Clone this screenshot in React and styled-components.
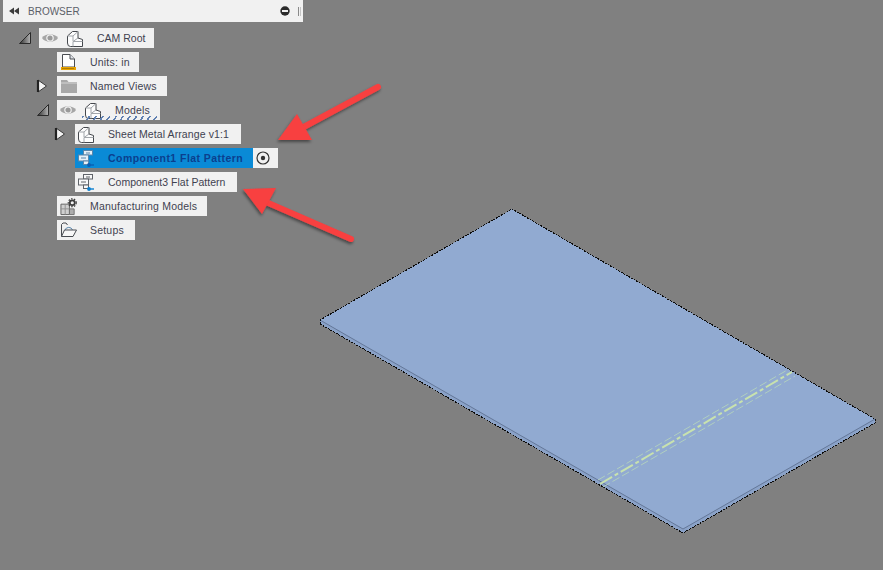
import React from "react";
import styled, { createGlobalStyle } from "styled-components";

const GlobalStyle = createGlobalStyle`
  html, body {
    margin: 0;
    padding: 0;
    background: #808080;
  }
`;

const Viewport = styled.div`
  position: relative;
  width: 883px;
  height: 570px;
  overflow: hidden;
  background: #808080;
  font-family: "Liberation Sans", Arial, sans-serif;
`;

const Scene = styled.svg`
  position: absolute;
  left: 0;
  top: 0;
`;

const Browser = styled.div`
  position: relative;
  width: 303px;
  padding-left: 3px;
  box-sizing: border-box;
`;

const Header = styled.div`
  display: flex;
  align-items: center;
  height: 22px;
  padding: 0 2px 0 6px;
  background: #f1f1f1;
  color: #5c6068;
  font-size: 10px;
`;

const HeaderTitle = styled.span`
  margin-left: 9px;
  flex: 1;
`;

const Grip = styled.span`
  width: 1px;
  height: 9px;
  margin-left: 8px;
  border-left: 1px solid #8a8a8a;
  border-right: 1px solid #c4c4c4;
`;

const Tree = styled.div`
  display: flex;
  flex-direction: column;
  gap: 4px;
  padding: 6px 0 0 15px;
`;

const Row = styled.div`
  display: flex;
  align-items: center;
  height: 20px;
  padding-left: ${(p) => p.$level * 18}px;
`;

const CaretSlot = styled.span`
  display: flex;
  width: 21px;
  height: 20px;
  align-items: center;
`;

const Pill = styled.div`
  position: relative;
  display: flex;
  align-items: center;
  height: 20px;
  width: ${(p) => p.$width}px;
  box-sizing: border-box;
  padding-left: 3px;
  background: ${(p) => (p.$selected ? "#0a8ad6" : "#f1f1f1")};
  color: ${(p) => (p.$selected ? "#0b3f8e" : "#3f4250")};
  font-size: 10.5px;
  font-weight: ${(p) => (p.$selected ? 700 : 400)};
  white-space: nowrap;
`;

const IconSlot = styled.span`
  display: flex;
  width: 17px;
  height: 17px;
  flex: none;
`;

const EyeSlot = styled.span`
  display: flex;
  width: 16px;
  margin-right: 9px;
  flex: none;
`;

const Label = styled.span`
  margin-left: 13px;
  letter-spacing: ${(p) => p.$tracking}px;
`;

const RadioCell = styled.div`
  display: flex;
  align-items: center;
  height: 20px;
  width: 25px;
  padding-left: 3px;
  box-sizing: border-box;
  background: #f1f1f1;
`;

const Hatch = styled.span`
  position: absolute;
  left: 25px;
  right: 1px;
  bottom: 0;
  height: 4px;
  background: repeating-linear-gradient(
    125deg,
    #5f80b2 0 1.6px,
    transparent 1.6px 5.5px
  );
`;

const CaretOpen = () => (
  <svg width="14" height="14" viewBox="0 0 14 14">
    <defs>
      <linearGradient id="caretFill" x1="0" y1="0" x2="1" y2="0">
        <stop offset="0" stopColor="#2e2e2e" />
        <stop offset="1" stopColor="#b4b4b4" />
      </linearGradient>
    </defs>
    <path d="M1.5 12.5 L12.5 1.5 V12.5 Z" fill="url(#caretFill)" stroke="#2a2a2a" strokeWidth="1" />
  </svg>
);

const CaretClosed = () => (
  <svg width="12" height="14" viewBox="0 0 12 14">
    <path d="M2 1 L10.5 7 L2 13 Z" fill="#f4f4f4" stroke="#3a3a3a" strokeWidth="1" />
    <path d="M2 1 V13" stroke="#222" strokeWidth="2.2" />
  </svg>
);

const Eye = () => (
  <svg width="16" height="16" viewBox="0 0 16 16">
    <path d="M0 8 C3 3 13 3 16 8 C13 13 3 13 0 8 Z" fill="#a6a6a6" />
    <circle cx="8" cy="8" r="3.2" fill="#9a9a9a" stroke="#f1f1f1" strokeWidth="1.2" />
  </svg>
);

const BodyIcon = () => (
  <svg width="17" height="17" viewBox="0 0 17 17" fill="none">
    <path d="M0.5 13 V6 L5.5 1.5 H11 V8 L15.5 9.5 V16.5 H3.5 Q0.5 16.5 0.5 13 Z" fill="#fdfdfd" stroke="#45484d" />
    <path d="M0.5 6 H6 L11 1.5 M6 6 V11 M6 16.5 V11.5 L11 8 M6 11.5 H15.5" stroke="#a2a6ab" />
  </svg>
);

const UnitsIcon = () => (
  <svg width="17" height="17" viewBox="0 0 17 17">
    <path d="M2.5 0.5 H10 L14.5 5 V13 H2.5 Z" fill="#fff" stroke="#4a4d52" />
    <path d="M10 0.5 V5 H14.5" fill="#dfe3e8" stroke="#4a4d52" />
    <rect x="1" y="13" width="15" height="3" fill="#eaa400" />
    <path d="M3 14v1M5 14v1M7 14v1M9 14v1M11 14v1M13 14v1" stroke="#7a5600" strokeWidth="1" />
  </svg>
);

const FolderIcon = () => (
  <svg width="17" height="17" viewBox="0 0 17 17">
    <path d="M1 2 H7 L8.5 4 H17 V15 H1 Z" fill="#a8a8a8" />
    <path d="M1 5 H17" stroke="#d4d4d4" />
  </svg>
);

const FlatPatternIcon = ({ selected }) => (
  <svg width="17" height="17" viewBox="0 0 17 17" fill={selected ? "#e6f0f7" : "#f9f9f9"} stroke={selected ? "#5a86ab" : "#60646a"}>
    <rect x="5.5" y="0.5" width="9" height="4.5" />
    <rect x="0.5" y="5" width="10" height="6" />
    <rect x="5.5" y="11" width="5" height="3.5" />
    <path d="M3 8 H8 M8 3 H12" fill="none" />
    <path d="M10 15 H16" stroke={selected ? "#0a5fb4" : "#0a7fd0"} strokeWidth="1.4" fill="none" />
    <circle cx="11" cy="15" r="1.9" fill={selected ? "#0a5fb4" : "#0a7fd0"} stroke="none" />
  </svg>
);

const ManufacturingIcon = () => (
  <svg width="18" height="18" viewBox="0 0 18 18">
    <path d="M1 6 H10 V17 H1 Z" fill="#cfcfcf" stroke="#606060" />
    <path d="M1 11 H10 M5.5 6 V17" stroke="#8f8f8f" />
    <path d="M10 11 H15 V17 H10 Z" fill="#adadad" stroke="#707070" />
    <circle cx="13" cy="4.5" r="2.6" fill="#f1f1f1" stroke="#3c3c3c" strokeWidth="1.8" />
    <circle cx="13" cy="4.5" r="4.2" fill="none" stroke="#3c3c3c" strokeWidth="1.3" strokeDasharray="1.6 1.4" />
  </svg>
);

const SetupsIcon = () => (
  <svg width="17" height="17" viewBox="0 0 17 17" fill="none" stroke="#4a4d52">
    <path d="M1.5 14.5 V2.5 L3 1 H6 L7.5 3" />
    <path d="M5 8 A4 4 0 0 1 12.5 8" stroke="#5b87ad" />
    <path d="M1.5 14.5 L4.5 8 H16.5 L13 14.5 Z" fill="#f8f8f8" />
  </svg>
);

const Radio = () => (
  <svg width="14" height="14" viewBox="0 0 14 14">
    <circle cx="7" cy="7" r="6" fill="none" stroke="#333" strokeWidth="1.2" />
    <circle cx="7" cy="7" r="2.2" fill="#333" />
  </svg>
);

const Rewind = () => (
  <svg width="10" height="8" viewBox="0 0 10 8" fill="#3c3c3c">
    <path d="M0 4 L5 0.5 V7.5 Z M5 4 L10 0.5 V7.5 Z" />
  </svg>
);

const MinusBadge = () => (
  <svg width="10" height="10" viewBox="0 0 10 10">
    <circle cx="5" cy="5" r="4.7" fill="#2b2b2b" />
    <rect x="2" y="4" width="6" height="2" fill="#f1f1f1" />
  </svg>
);

// the sheet on the canvas and the two callout arrows
const SceneArt = () => (
  <Scene width="883" height="570" viewBox="0 0 883 570">
    <defs>
      <filter id="arrowShadow" x="-20%" y="-20%" width="140%" height="140%">
        <feDropShadow dx="-1" dy="2" stdDeviation="1.6" floodColor="#000" floodOpacity="0.45" />
      </filter>
    </defs>
    <path d="M320 320 V324 L683 533 L875 423 V419 L683 529 Z" fill="#8aa2c8" />
    <path d="M512 209 L875 419 L683 529 L320 320 Z" fill="#91aad1" />
    <path d="M320 320 L683 529 L875 419" fill="none" stroke="#5b6f92" strokeWidth="0.8" />
    <path d="M320 324 L683 533 L875 423 V419 L512 209 L320 320 V324" fill="none" stroke="#0c0c0c" strokeWidth="1" strokeDasharray="2 1" shapeRendering="crispEdges" />
    <path d="M600 484 L792 372" stroke="#c8e2ae" strokeWidth="2" strokeDasharray="14 3 4 3" fill="none" />
    <path d="M598 480 L789 369 M603 487 L795 376" stroke="#b0cfc0" strokeWidth="1" strokeDasharray="8 3" fill="none" />
    <g filter="url(#arrowShadow)" fill="#f83f3f">
      <path d="M378 87 L300 129" stroke="#f83f3f" strokeWidth="6" strokeLinecap="round" />
      <path d="M278 140 L297 114 L312 140 Z" />
      <path d="M351 239 L266 202" stroke="#f83f3f" strokeWidth="6" strokeLinecap="round" />
      <path d="M243 189 L276 188 L262 214 Z" />
    </g>
  </Scene>
);

const nodes = [
  { level: 0, caret: "open", eye: true, icon: <BodyIcon />, label: "CAM Root", width: 115, tracking: 0 },
  { level: 1, icon: <UnitsIcon />, label: "Units: in", width: 82, tracking: 0.2 },
  { level: 1, caret: "closed", icon: <FolderIcon />, label: "Named Views", width: 110, tracking: 0.2 },
  { level: 1, caret: "open", eye: true, icon: <BodyIcon />, label: "Models", width: 103, hatch: true, tracking: 0.2 },
  { level: 2, caret: "closed", icon: <BodyIcon />, label: "Sheet Metal Arrange v1:1", width: 166, tracking: 0.1 },
  { level: 2, icon: <FlatPatternIcon selected />, label: "Component1 Flat Pattern", width: 178, selected: true, tracking: 0.45 },
  { level: 2, icon: <FlatPatternIcon />, label: "Component3 Flat Pattern", width: 162, tracking: 0 },
  { level: 1, icon: <ManufacturingIcon />, label: "Manufacturing Models", width: 150, tracking: 0.2 },
  { level: 1, icon: <SetupsIcon />, label: "Setups", width: 78, tracking: 0.2 },
];

const App = () => (
  <>
    <GlobalStyle />
    <Viewport>
      <SceneArt />
      <Browser>
        <Header>
          <Rewind />
          <HeaderTitle>BROWSER</HeaderTitle>
          <MinusBadge />
          <Grip />
        </Header>
        <Tree>
          {nodes.map((n) => (
            <Row key={n.label} $level={n.level}>
              <CaretSlot>
                {n.caret === "open" && <CaretOpen />}
                {n.caret === "closed" && <CaretClosed />}
              </CaretSlot>
              <Pill $width={n.width} $selected={n.selected}>
                {n.eye && (
                  <EyeSlot>
                    <Eye />
                  </EyeSlot>
                )}
                <IconSlot>{n.icon}</IconSlot>
                <Label $tracking={n.tracking}>{n.label}</Label>
                {n.hatch && <Hatch />}
              </Pill>
              {n.selected && (
                <RadioCell>
                  <Radio />
                </RadioCell>
              )}
            </Row>
          ))}
        </Tree>
      </Browser>
    </Viewport>
  </>
);

export default App;
